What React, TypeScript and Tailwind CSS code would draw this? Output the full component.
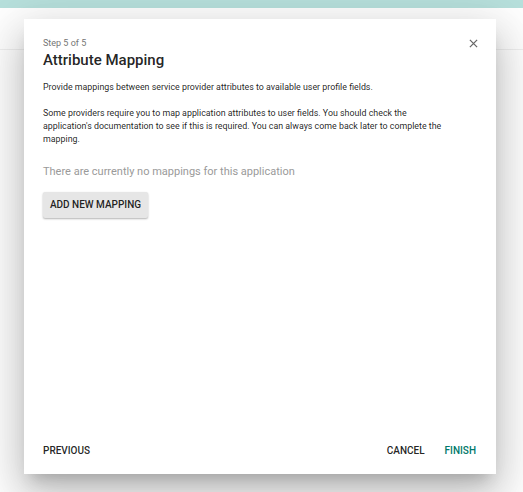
export default function App() {
  return (
    <div className="relative h-[492px] w-full overflow-hidden bg-white font-['Roboto',sans-serif]">
      {/* page behind the dialog */}
      <div className="h-[8px] bg-[#b7e0dc]" />
      <div className="h-[42px] border-b border-[#f0f0f0]" />

      {/* dialog */}
      <div className="absolute left-[24px] top-[19px] flex h-[455px] w-[472px] flex-col bg-white px-[19px] pt-[18px] pb-[17px] shadow-[0_11px_15px_-7px_rgba(0,0,0,0.2),0_24px_38px_3px_rgba(0,0,0,0.14),0_9px_46px_8px_rgba(0,0,0,0.12)]">
        <div className="flex items-start justify-between">
          <div>
            <div className="text-[9px] leading-[12px] text-[#757575]">Step 5 of 5</div>
            <h2 className="mt-[1px] text-[15px] leading-[20px] font-medium text-[rgba(0,0,0,0.87)]">
              Attribute Mapping
            </h2>
          </div>
          <button className="mt-[2px] mr-[-1px] text-[#666]">
            <svg width="9" height="9" viewBox="0 0 10 10" fill="none" stroke="currentColor" strokeWidth="1.4">
              <path d="M1 1 L9 9 M9 1 L1 9" />
            </svg>
          </button>
        </div>

        <div className="pr-[22px] text-[8.85px] leading-[13px] text-[rgba(0,0,0,0.87)]">
          <p className="mt-[11px]">
            Provide mappings between service provider attributes to available user profile fields.
          </p>
          <p className="mt-[13px]">
            Some providers require you to map application attributes to user fields. You should check the
            application's documentation to see if this is required. You can always come back later to complete the
            mapping.
          </p>
        </div>

        <p className="mt-[18px] text-[11px] leading-[16px] text-[#9a9a9a]">
          There are currently no mappings for this application
        </p>

        <div className="mt-[11px]">
          <button className="h-[26px] w-[105px] rounded-[2px] bg-[#e6e6e6] text-[10px] font-medium text-[rgba(0,0,0,0.87)] shadow-[0_1px_2px_rgba(0,0,0,0.3)]">
            ADD NEW MAPPING
          </button>
        </div>

        <div className="mt-auto flex items-center justify-between text-[10px] leading-[12px] font-medium">
          <button className="text-[rgba(0,0,0,0.87)]">PREVIOUS</button>
          <div className="flex items-center gap-[20px]">
            <button className="text-[rgba(0,0,0,0.87)]">CANCEL</button>
            <button className="mr-[1px] text-[#00796b]">FINISH</button>
          </div>
        </div>
      </div>
    </div>
  );
}
